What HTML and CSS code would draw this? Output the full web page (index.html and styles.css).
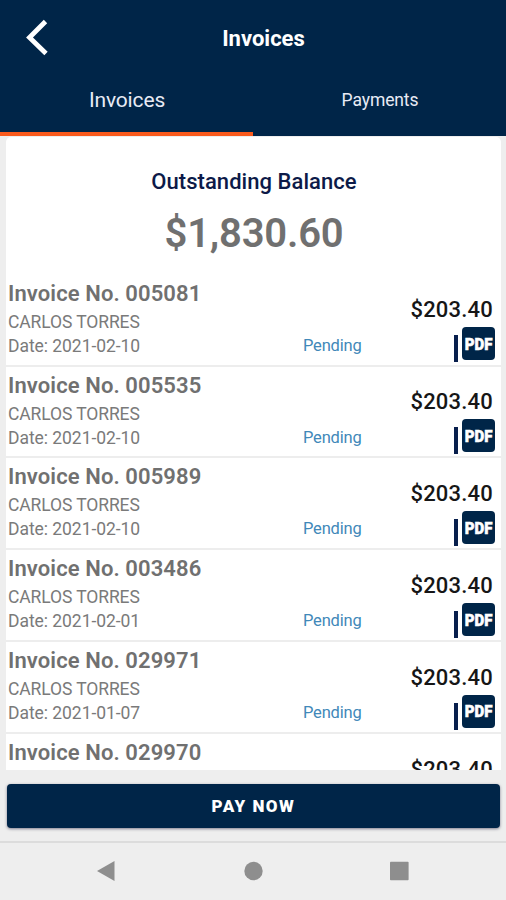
FILE: index.html
```
<!DOCTYPE html>
<html lang="en">
<head>
<meta charset="utf-8">
<title>Invoices</title>
<link rel="stylesheet" href="styles.css">
</head>
<body>
<header class="bar">
  <svg class="back" viewBox="0 0 24 38" width="24" height="38"><path d="M20.500 2.500L4.500 18.500l16.500 16" fill="none" stroke="#fff" stroke-width="4.800"/></svg>
  <h1 class="title">Invoices</h1>
</header>
<nav class="tabs">
  <div class="tab active"><span>Invoices</span></div>
  <div class="tab"><span>Payments</span></div>
</nav>
<main class="card">
  <section class="balance">
    <h2 class="label"><span>Outstanding Balance</span></h2>
    <div class="total"><span>$1,830.60</span></div>
  </section>
  <ul class="list">
    <li class="row"><div class="info"><h3>Invoice No. 005081</h3><p class="name">CARLOS TORRES</p><p class="date">Date: 2021-02-10</p></div><div class="status">Pending</div><div class="side"><div class="amount">$203.40</div><div class="file"><i></i><b><span>PDF</span></b></div></div></li>
    <li class="row"><div class="info"><h3>Invoice No. 005535</h3><p class="name">CARLOS TORRES</p><p class="date">Date: 2021-02-10</p></div><div class="status">Pending</div><div class="side"><div class="amount">$203.40</div><div class="file"><i></i><b><span>PDF</span></b></div></div></li>
    <li class="row"><div class="info"><h3>Invoice No. 005989</h3><p class="name">CARLOS TORRES</p><p class="date">Date: 2021-02-10</p></div><div class="status">Pending</div><div class="side"><div class="amount">$203.40</div><div class="file"><i></i><b><span>PDF</span></b></div></div></li>
    <li class="row"><div class="info"><h3>Invoice No. 003486</h3><p class="name">CARLOS TORRES</p><p class="date">Date: 2021-02-01</p></div><div class="status">Pending</div><div class="side"><div class="amount">$203.40</div><div class="file"><i></i><b><span>PDF</span></b></div></div></li>
    <li class="row"><div class="info"><h3>Invoice No. 029971</h3><p class="name">CARLOS TORRES</p><p class="date">Date: 2021-01-07</p></div><div class="status">Pending</div><div class="side"><div class="amount">$203.40</div><div class="file"><i></i><b><span>PDF</span></b></div></div></li>
    <li class="row"><div class="info"><h3>Invoice No. 029970</h3></div><div class="side"><div class="amount">$203.40</div></div></li>
  </ul>
</main>
<div class="action"><button class="pay">PAY NOW</button></div>
<footer class="nav">
  <svg viewBox="0 0 20 22" width="20" height="22"><path d="M1 11L18.500 1v20z" fill="#8e8e8e"/></svg>
  <svg viewBox="0 0 20 20" width="20" height="20"><circle cx="10.500" cy="10" r="9.200" fill="#8e8e8e"/></svg>
  <svg viewBox="0 0 20 20" width="20" height="20"><rect x="1" y=".7" width="18.600" height="18.600" rx=".8" fill="#8e8e8e"/></svg>
</footer>
</body>
</html>
```
FILE: styles.css
```
* { box-sizing: border-box; margin: 0; padding: 0; }
body {
  width: 506px;
  height: 900px;
  overflow: hidden;
  display: flex;
  flex-direction: column;
  background: #eee;
  font-family: Roboto, "Liberation Sans", sans-serif;
}
.bar {
  height: 76px;
  flex: none;
  display: grid;
  grid-template-columns: 54px 1fr 33px;
  align-items: center;
  background: #002548;
  color: #fff;
}
.back { margin-left: 25px; }
.title {
  text-align: center;
  font-size: 22px;
  font-weight: 700;
}
.tabs { display: flex; height: 60px; flex: none; background: #002548; }
.tab {
  flex: 1;
  height: 60px;
  padding-top: 11px;
  line-height: 26px;
  text-align: center;
  font-size: 17.5px;
  font-weight: 400;
  letter-spacing: -0.1px;
  color: #e8ebf5;
  padding-left: 1px;
}
.tab.active { font-size: 21px; letter-spacing: -0.150px; border-bottom: 4px solid #fa5a1c; }
.card {
  width: 495px;
  height: 633px;
  flex: none;
  margin: 1px 0 0 6px;
  overflow: hidden;
  background: #fff;
  border-radius: 5px 5px 0 0;
}
.balance { height: 137.700px; text-align: center; padding: 31px 0 0 1px; }
.label { font-size: 22px; line-height: 28px; font-weight: 500; color: #0c1a48; letter-spacing: 0.05px; }
.total { font-size: 40px; line-height: 50px; margin-top: 13px; font-weight: 600; color: #707070; letter-spacing: -0.2px; }
.list { list-style: none; }
.row {
  height: 91.850px;
  display: grid;
  grid-template-columns: 297px 90px 1fr;
  border-bottom: 2px solid #ededed;
}
.info { padding: 5px 0 0 2px; color: #7a7a7a; white-space: nowrap; }
.info h3 { font-size: 22px; line-height: 28px; font-weight: 600; letter-spacing: 0.1px; color: #707070; }
.info p { font-size: 17.500px; line-height: 24px; }
.info .name { padding-top: 1px; line-height: 26px; height: 26px; letter-spacing: -0.1px; }
.info .date { letter-spacing: -0.05px; }
.status { padding-top: 59px; line-height: 24px; font-size: 16.500px; letter-spacing: -0.2px; color: #4188b9; }
.side { grid-column: 3; padding: 21.800px 6px 0 0; }
.amount { text-align: right; font-size: 22px; line-height: 28px; font-weight: 500; letter-spacing: 0.2px; color: #161616; padding-right: 2px; }
.file { display: flex; justify-content: flex-end; align-items: flex-start; margin-top: 3px; }
.file i { width: 4px; height: 27px; margin: 8px 4px 0 0; background: #081f4d; }
.file b {
  width: 33px;
  height: 33px;
  display: flex;
  align-items: center;
  justify-content: center;
  border-radius: 4px;
  background: #002548;
  color: #fff;
  font-size: 15px;
  font-weight: 900;
  line-height: 20px;
}
.file span { transform: scaleY(1.15); -webkit-text-stroke: 0.5px #fff; }
.action { padding: 14px 6px 0 7px; height: 71px; flex: none; }
.pay {
  display: block;
  width: 493px;
  height: 44px;
  border: 0;
  border-radius: 4px;
  background: #002548;
  box-shadow: 0 1px 3px rgba(20, 15, 50, 0.5);
  color: #fff;
  font: 900 17px Roboto, sans-serif;
  letter-spacing: 1.500px;
}
.nav {
  height: 59px;
  flex: none;
  border-top: 2px solid #dcdcdc;
  display: flex;
  justify-content: space-between;
  align-items: center;
  padding: 0 97px 2px 96px;
}
```
